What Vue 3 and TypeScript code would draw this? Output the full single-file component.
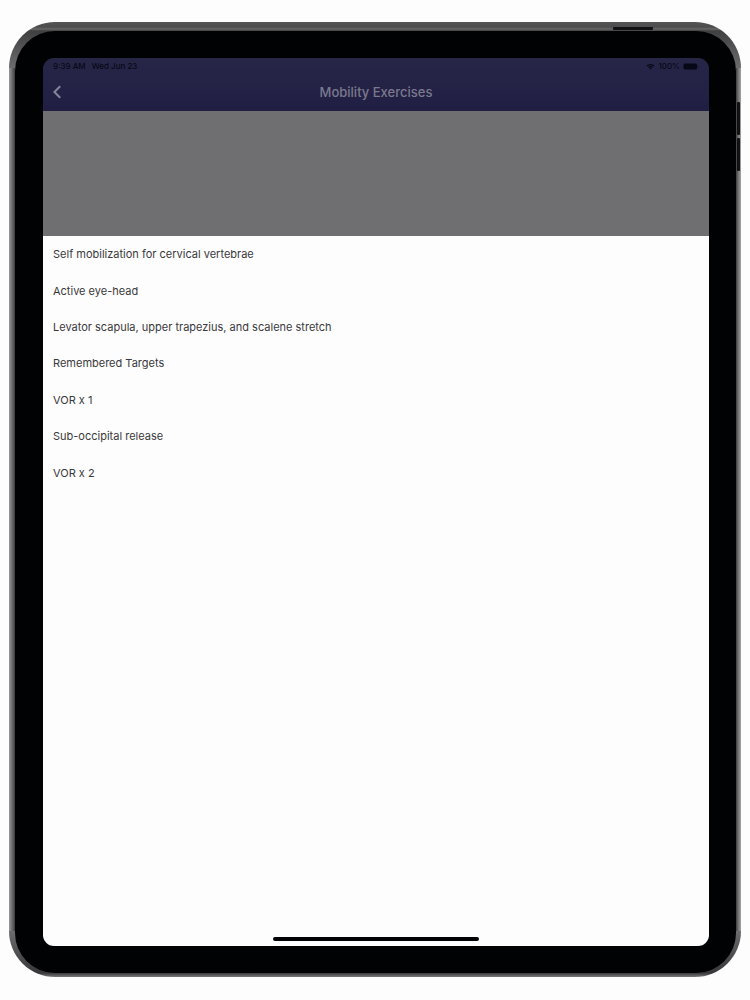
<script setup lang="ts">
const exercises: string[] = [
  'Self mobilization for cervical vertebrae',
  'Active eye-head',
  'Levator scapula, upper trapezius, and scalene stretch',
  'Remembered Targets',
  'VOR x 1',
  'Sub-occipital release',
  'VOR x 2',
]
</script>

<template>
  <div class="page">
    <div class="tablet">
      <span class="key key-power"></span>
      <span class="key key-up"></span>
      <span class="key key-down"></span>
      <div class="bezel">
        <div class="screen">
          <header class="top">
            <div class="status">
              <div class="clock"><span>9:39 AM</span><span>Wed Jun 23</span></div>
              <div class="signals">
                <svg class="wifi" viewBox="0 0 18 14" aria-hidden="true">
                  <path d="M1 5.2a11.5 11.5 0 0 1 16 0l-1.8 1.9a8.8 8.8 0 0 0-12.4 0zM4 8.2a7.2 7.2 0 0 1 10 0l-1.8 1.9a4.6 4.6 0 0 0-6.4 0zM6.9 11.1a3 3 0 0 1 4.2 0L9 13.4z" />
                </svg>
                <span>100%</span>
                <svg class="battery" viewBox="0 0 32 14" aria-hidden="true">
                  <rect x="1" y="1" width="27" height="12" rx="3" />
                  <path d="M29.5 5v4q1.7-.5 1.7-2t-1.7-2z" />
                </svg>
              </div>
            </div>
            <div class="nav">
              <button class="back" type="button" aria-label="Back">
                <svg viewBox="0 0 10 14" aria-hidden="true"><path d="M8.200 1.200 2.400 7l5.800 5.800" /></svg>
              </button>
              <h1>Mobility Exercises</h1>
            </div>
          </header>
          <div class="banner"></div>
          <main class="content">
            <ul class="list">
              <li v-for="exercise in exercises" :key="exercise">{{ exercise }}</li>
            </ul>
            <div class="home"></div>
          </main>
        </div>
      </div>
    </div>
  </div>
</template>

<style>
body {
  margin: 0;
  background: #fefdfe;
}
</style>

<style scoped>
.page {
  box-sizing: border-box;
  display: flex;
  min-height: 100vh;
  padding: 22px 9px 23px;
  font-family: Inter, "Liberation Sans", sans-serif;
}

.tablet {
  position: relative;
  box-sizing: border-box;
  display: flex;
  flex: 1;
  padding: 9px 5px 4px 6px;
  border-radius: 46px;
  background:
    linear-gradient(to right, #98989a 0, #6c6c6e 3px, #3c3c3e 6px, transparent 6px) 0 46px / 6px calc(100% - 92px) no-repeat,
    linear-gradient(to left, #a4a4a4 0, #6c6c6e 3px, #3c3c3e 5px, transparent 5px) 100% 46px / 5px calc(100% - 92px) no-repeat,
    linear-gradient(to bottom, #555556 0, #4c4c4d 5px, #676768 7px, #404041 9px, #6c6c6e 46px, #6c6c6e calc(100% - 46px), #38383a calc(100% - 4px), #79797b 100%);
}

.key {
  position: absolute;
  border-radius: 1px;
  background: #111113;
}

.key-power {
  top: 5px;
  right: 88px;
  width: 40px;
  height: 3px;
}

.key-up,
.key-down {
  right: 1px;
  width: 3px;
  height: 33px;
}

.key-up {
  top: 80px;
}

.key-down {
  top: 116px;
}

.bezel {
  box-sizing: border-box;
  display: flex;
  flex: 1;
  padding: 27px;
  padding-left: 28px;
  border-radius: 40px;
  background: #010203;
}

.screen {
  display: flex;
  flex: 1;
  flex-direction: column;
  min-width: 0;
  overflow: hidden;
  border-radius: 11px;
}

.top {
  height: 53px;
  background: linear-gradient(to bottom, #282647, #201e43);
}

.status {
  display: flex;
  justify-content: space-between;
  height: 17px;
  padding: 0 10px;
  font-size: 8px;
  font-weight: 500;
  line-height: 17px;
  color: #070716;
}

.clock {
  display: flex;
  gap: 6px;
}

.signals {
  display: flex;
  gap: 3px;
  align-items: center;
}

.wifi {
  width: 9px;
  height: 7px;
  fill: #070716;
}

.battery {
  width: 16px;
  height: 7px;
  fill: #070716;
}

.nav {
  display: grid;
  grid-template-columns: 28px 1fr 28px;
  align-items: center;
  height: 34px;
}

.back {
  display: flex;
  align-items: center;
  justify-content: flex-end;
  height: 28px;
  padding: 0 9px 0 0;
  border: 0;
  background: none;
  cursor: pointer;
}

.back svg {
  width: 10px;
  height: 14px;
  fill: none;
  stroke: #85849a;
  stroke-width: 2;
}

h1 {
  margin: 0;
  font-size: 13px;
  font-weight: 500;
  line-height: 18px;
  text-align: center;
  color: #7b798e;
}

.banner {
  height: 125px;
  background: #6f6f71;
}

.content {
  display: flex;
  flex: 1;
  flex-direction: column;
  background: #fefdfe;
}

.list {
  display: grid;
  grid-auto-rows: 1fr;
  height: 255px;
  margin: 0;
  padding: 0 10px;
  list-style: none;
  font-size: 11px;
  line-height: 16px;
  color: #39393b;
}

.list li {
  display: flex;
  align-items: center;
}

.home {
  align-self: center;
  width: 31%;
  height: 4px;
  margin-top: auto;
  margin-bottom: 5px;
  border-radius: 2px;
  background: #010203;
}
</style>
